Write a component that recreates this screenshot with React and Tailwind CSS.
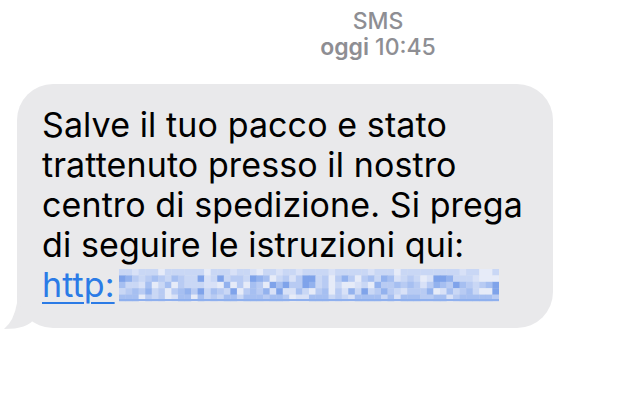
import React from 'react'

const BLUES = ['#e6ebf8', '#d8e1f7', '#c9d7f5', '#b8cbf3', '#a6bff1', '#93b2ee', '#7fa3ea', '#c9d7f5', '#b8cbf3']

// blurred link, drawn as a mosaic of small cells
function Mosaic() {
  const cols = 58
  const rows = 5
  const cw = 6.55
  const ch = 6.4
  const cells = []
  let seed = 7
  for (let r = 0; r < rows; r++) {
    for (let c = 0; c < cols; c++) {
      seed = (seed * 9301 + 49297) % 233280
      const n = seed / 233280
      let idx = Math.floor(n * BLUES.length)
      if (r === 0) idx = Math.min(idx, 2)
      if (r === rows - 1) idx = Math.min(idx, 4)
      cells.push(
        <rect key={`${r}-${c}`} x={c * cw} y={r * ch} width={cw + 0.3} height={ch + 0.3} fill={BLUES[idx]} />
      )
    }
  }
  return (
    <svg width="380" height="34" viewBox="0 0 380 34" className="inline-block align-[-6px] ml-[4px]">
      {cells}
      <rect x="0" y="30" width="380" height="2" fill="#8fb0ee" />
    </svg>
  )
}

export default function App() {
  return (
    <div className="w-[640px] h-[402px] bg-white overflow-hidden" style={{ fontFamily: 'Inter, "Liberation Sans", sans-serif' }}>
      <div className="flex flex-col items-center pl-[116px] pt-[8px] text-[23px] leading-[26px] font-medium text-[#8e8e93]">
        <span>SMS</span>
        <span>
          <span className="font-semibold">oggi</span> 10:45
        </span>
      </div>

      <div className="relative ml-[17px] mt-[24px] w-[536px] h-[244px]">
        <svg width="40" height="40" viewBox="0 0 40 40" className="absolute left-[-13px] bottom-[-1px]">
          <path d="M13 0 L30 0 L30 30 Q24 40 0 40 Q10 32 13 14 Z" fill="#e9e9eb" />
        </svg>
        <div className="relative h-full rounded-[36px] bg-[#e9e9eb] pl-[25px] pt-[21px] text-[34px] leading-[40px] tracking-[0.1px] text-black">
          Salve il tuo pacco e stato
          <br />
          trattenuto presso il nostro
          <br />
          centro di spedizione. Si prega
          <br />
          di seguire le istruzioni qui:
          <br />
          <span className="text-[#2b7be6] underline decoration-2 underline-offset-[5px]">http:</span>
          <Mosaic />
        </div>
      </div>
    </div>
  )
}
